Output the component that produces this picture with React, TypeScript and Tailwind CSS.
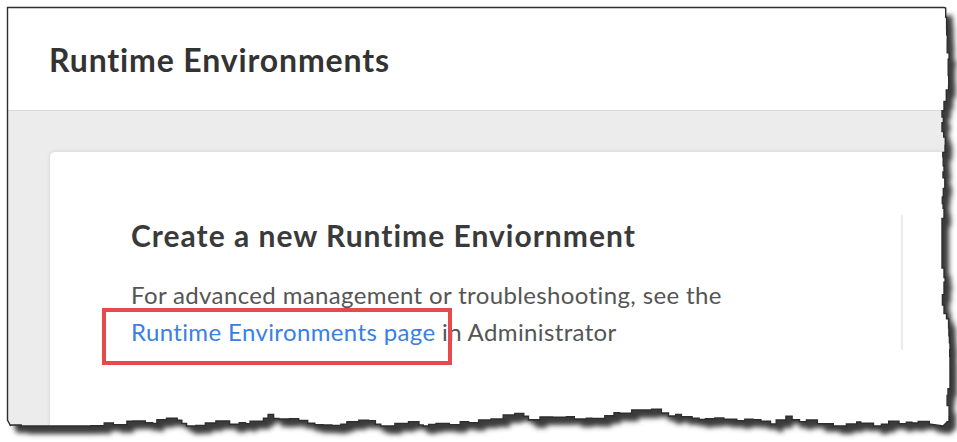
import { useMemo } from "react";

// small seeded generator so the torn edge is the same on every render
function seeded(seed: number) {
  let s = seed;
  return () => {
    s = (s + 0x6d2b79f5) | 0;
    let t = Math.imul(s ^ (s >>> 15), 1 | s);
    t = (t + Math.imul(t ^ (t >>> 7), 61 | t)) ^ t;
    return ((t ^ (t >>> 14)) >>> 0) / 4294967296;
  };
}

const W = 957;
const H = 442;

function buildTear() {
  const rnd = seeded(42);
  const pts: string[] = ["M7.5 7.5", "L944 7.5"];

  // right side, top to bottom, stepped like a ripped sheet
  let x = 946;
  let y = 8;
  while (y < 422) {
    const ny = Math.min(422, y + 4 + rnd() * 9);
    const nx = Math.min(950, Math.max(942, x + (rnd() - 0.5) * 5));
    pts.push(`L${nx.toFixed(1)} ${y.toFixed(1)}`);
    pts.push(`L${nx.toFixed(1)} ${ny.toFixed(1)}`);
    x = nx;
    y = ny;
  }
  pts.push(`L943 426`);

  // bottom side, right to left
  let bx = 943;
  let by = 424;
  while (bx > 12) {
    const nbx = Math.max(8, bx - (4 + rnd() * 10));
    let nby = Math.min(426, Math.max(409, by + (rnd() - 0.5) * 8));
    if (nbx < 660 && nbx > 640) nby = 410;
    if (nbx < 26 && nbx > 14) nby = 425;
    pts.push(`L${nbx.toFixed(1)} ${by.toFixed(1)}`);
    pts.push(`L${nbx.toFixed(1)} ${nby.toFixed(1)}`);
    bx = nbx;
    by = nby;
  }
  pts.push("L7.5 420", "Z");
  return pts.join(" ");
}

function TornEdge() {
  const edge = useMemo(buildTear, []);
  return (
    <svg
      className="pointer-events-none absolute left-0 top-0"
      width={W}
      height={H}
      viewBox={`0 0 ${W} ${H}`}
    >
      <defs>
        <filter id="tear-shadow" x="-5%" y="-5%" width="110%" height="110%">
          <feGaussianBlur stdDeviation="2.8" />
        </filter>
        <mask id="tear-outside">
          <rect width={W} height={H} fill="white" />
          <path d={edge} fill="black" />
        </mask>
      </defs>
      <path d={`M0 0 H${W} V${H} H0 Z ${edge}`} fill="white" fillRule="evenodd" />
      <g mask="url(#tear-outside)">
        <path d={edge} transform="translate(7 8)" fill="#3a3a3a" filter="url(#tear-shadow)" />
      </g>
      <path d={edge} fill="none" stroke="#2e2e2e" strokeWidth="1.4" />
    </svg>
  );
}

export default function App() {
  return (
    <div
      className="relative h-[442px] w-[957px] overflow-hidden bg-white pl-[8px] pt-[8px]"
      style={{ fontFamily: "Lato, 'Open Sans', sans-serif" }}
    >
      <div className="flex h-[434px] w-[949px] flex-col overflow-hidden">
        {/* page header */}
        <div className="h-[103px] shrink-0 border-b border-[#d9d9d9] bg-white pl-[41px] pt-[36px]">
          <h1 className="text-[32px] font-bold leading-[32px] tracking-[0.85px] text-[#333333]">
            Runtime Environments
          </h1>
        </div>

        {/* page body */}
        <div className="flex-1 bg-[#ececec] pl-[42px] pt-[41px]">
          <div className="flex h-[400px] w-[960px] rounded-[5px] bg-white pl-[81px] shadow-[0_0_4px_rgba(0,0,0,0.12)]">
            <div className="w-[770px] pt-[65px]">
              <h2 className="text-[30px] font-bold leading-[36px] tracking-[1px] text-[#3a3a3a]">
                Create a new Runtime Enviornment
              </h2>
              <p className="mt-[23px] text-[24px] leading-[37px] tracking-[0.37px] text-[#555555]">
                For advanced management or troubleshooting, see the
                <br />
                <a className="text-[#3b80e3]">Runtime Environments page</a> in Administrator
              </p>
            </div>
            <div className="mt-[63px] h-[135px] w-[2px] bg-[#ebebeb]" />
          </div>
        </div>
      </div>

      {/* callout around the link */}
      <div className="absolute left-[102px] top-[308px] h-[57px] w-[350px] border-[4px] border-[#e64a4a]" />

      <TornEdge />
    </div>
  );
}
